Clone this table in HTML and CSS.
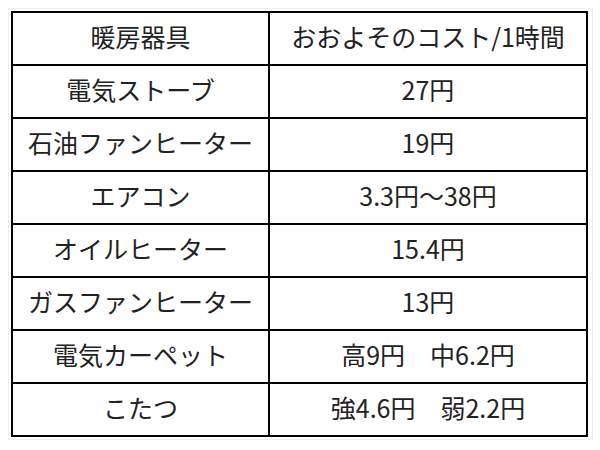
FILE: index.html
```html
<!DOCTYPE html>
<html lang="ja">
<head>
<meta charset="utf-8">
<link rel="stylesheet" href="styles.css">
</head>
<body>
<div class="frame">
<table class="cost">
<tr><td class="name">暖房器具</td><td class="val">おおよそのコスト/1時間</td></tr>
<tr><td class="name">電気ストーブ</td><td class="val">27円</td></tr>
<tr><td class="name">石油ファンヒーター</td><td class="val">19円</td></tr>
<tr><td class="name">エアコン</td><td class="val">3.3円～38円</td></tr>
<tr><td class="name">オイルヒーター</td><td class="val">15.4円</td></tr>
<tr><td class="name">ガスファンヒーター</td><td class="val">13円</td></tr>
<tr><td class="name">電気カーペット</td><td class="val">高9円　中6.2円</td></tr>
<tr><td class="name">こたつ</td><td class="val">強4.6円　弱2.2円</td></tr>
</table>
</div>
</body>
</html>
```
FILE: styles.css
```css
html, body {
  margin: 0;
  padding: 0;
  background: #fff;
}
.frame {
  margin: 8px;
  width: 579px;
  border: 1px solid #ececec;
  padding: 2px;
}
.cost {
  border-collapse: collapse;
  width: 577px;
  table-layout: fixed;
  font-family: "Noto Sans CJK JP", sans-serif;
  font-size: 25px;
  color: #222;
}
.cost td {
  border: 2px solid #000;
  height: 47px;
  padding: 0 0 4px 0;
  text-align: center;
  vertical-align: middle;
  line-height: 1;
  white-space: nowrap;
}
.cost .name {
  width: 255px;
}
```
